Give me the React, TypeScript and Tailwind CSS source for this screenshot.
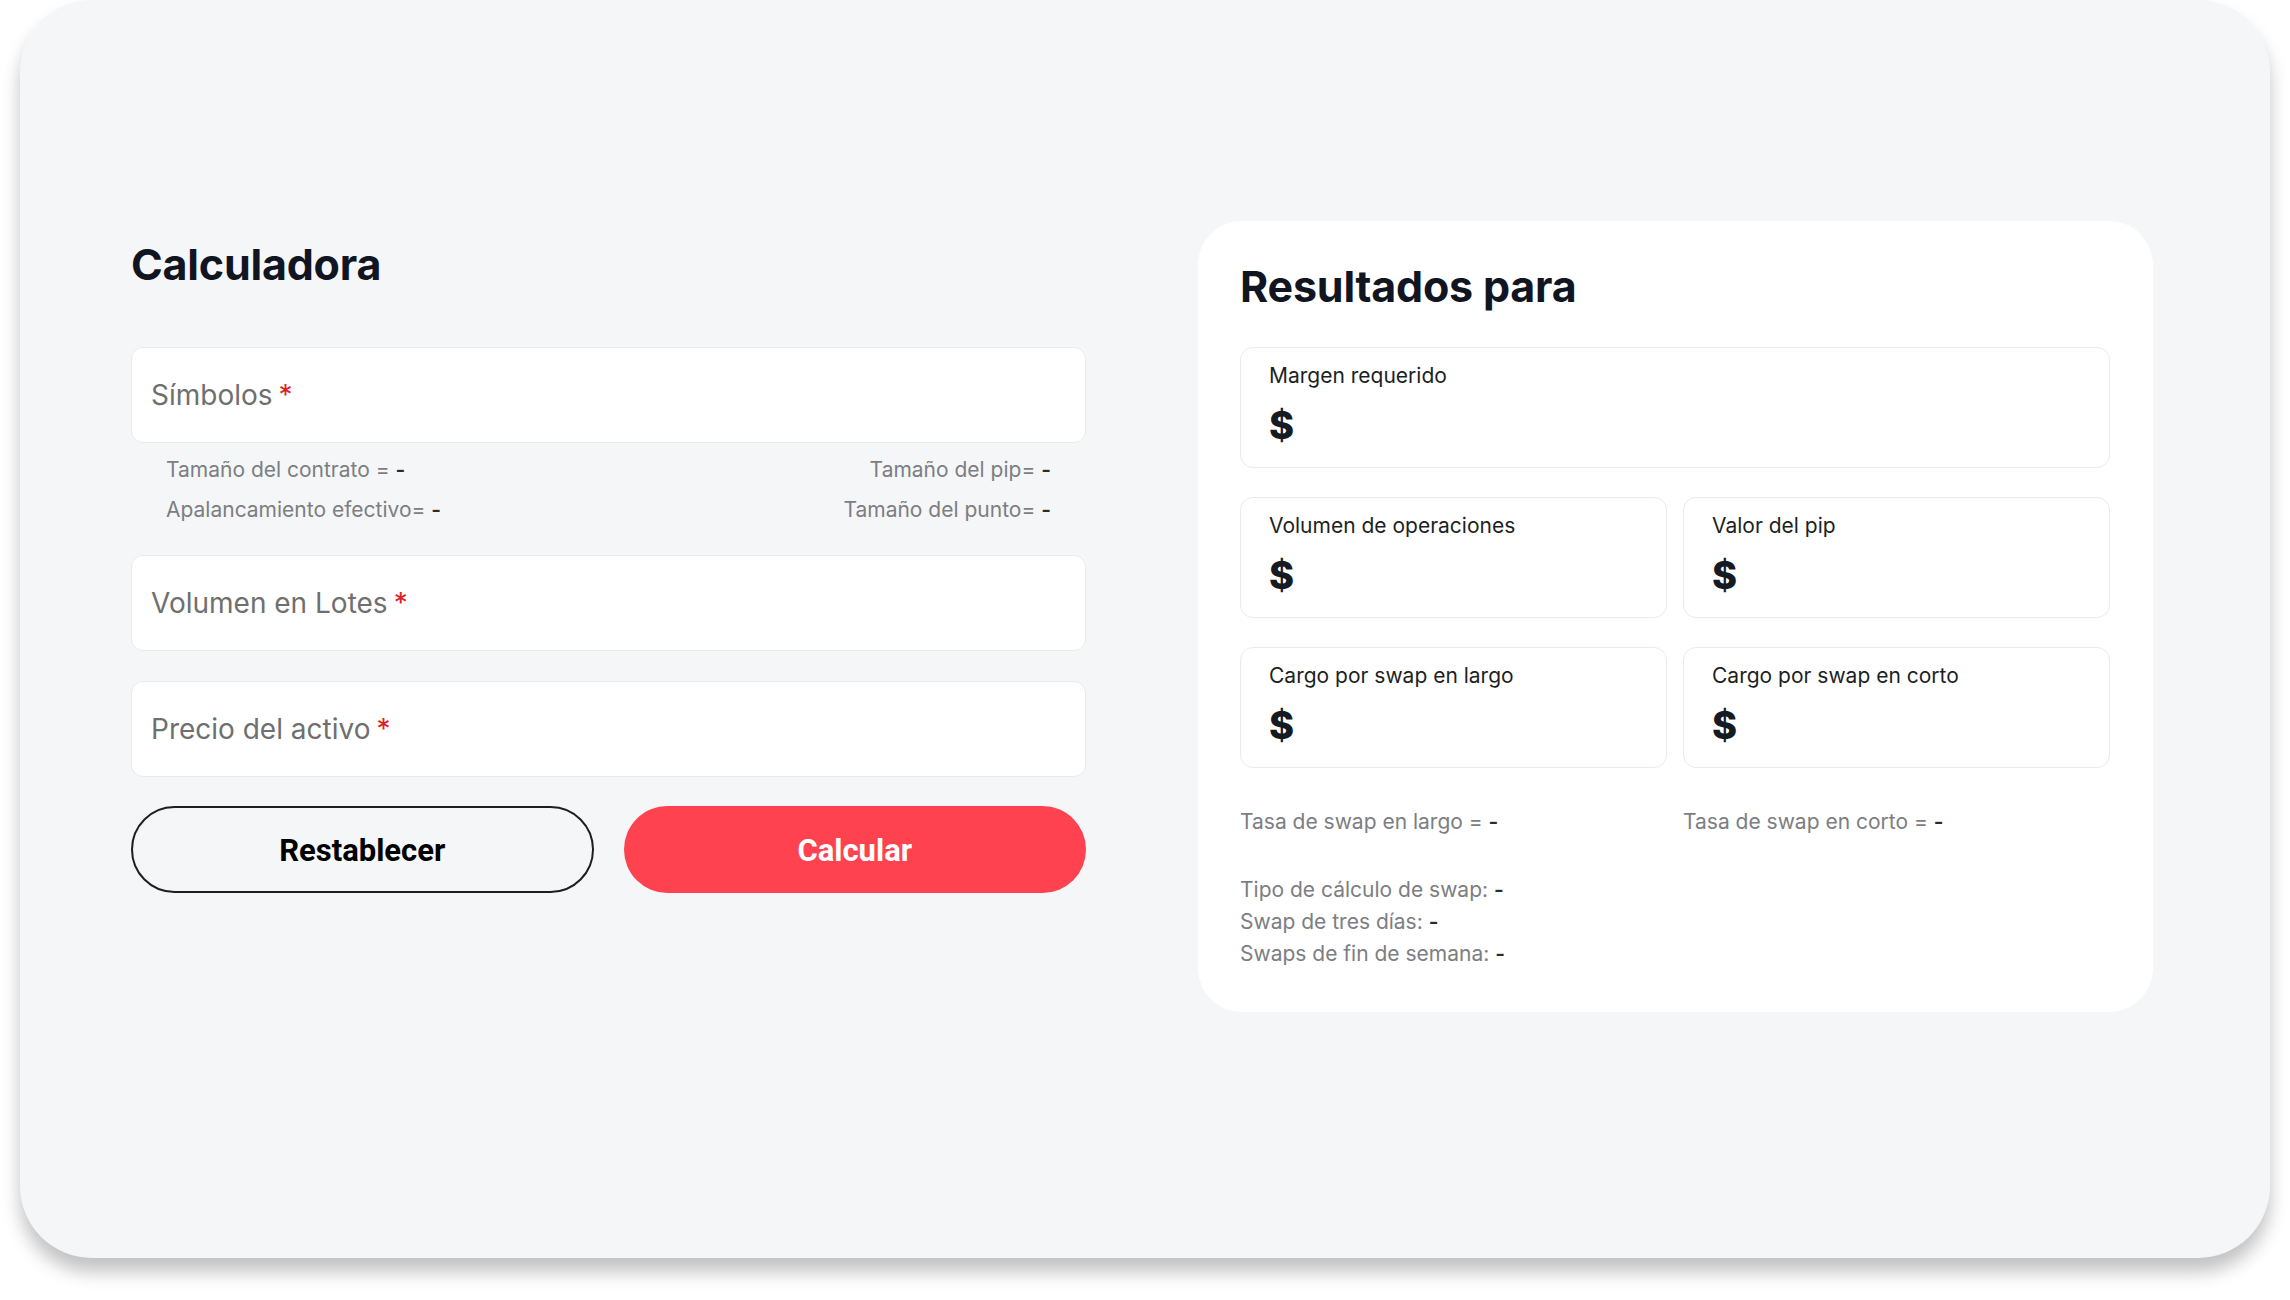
import React from 'react';

const Dash = () => <span className="font-semibold text-[#2b2b2b]">-</span>;

const FieldBox = ({ label }: { label: string }) => (
  <div className="h-[96px] rounded-[12px] border border-[#e9eaec] bg-white flex items-center px-[19px]">
    <span className="text-[28px] leading-[34px] text-[#6f6f6f]">
      {label}
      <span className="ml-[6px] text-[#df1f26]">*</span>
    </span>
  </div>
);

const ResultBox = ({ label }: { label: string }) => (
  <div className="rounded-[13px] border border-[#ebebed] bg-white px-[28px] pt-[14px] pb-[20px]">
    <div className="text-[21px] leading-[28px] text-[#1d1f24]">{label}</div>
    <div className="mt-[13px] text-[38px] leading-[44px] font-extrabold text-[#161a23]">$</div>
  </div>
);

const InfoLine = ({ text }: { text: string }) => (
  <div className="text-[21px] leading-[32px] text-[#7c7e82]">
    {text} <Dash />
  </div>
);

export default function App() {
  return (
    <div className="w-full h-[1300px] bg-white px-[20px] pb-[42px] font-['Inter',sans-serif]">
      <div className="h-full rounded-[72px] bg-[#f5f6f8] shadow-[0_14px_18px_rgba(0,0,0,0.24)] pt-[221px]">
        <div className="ml-[111px] w-[2022px] grid grid-cols-[955px_955px] gap-x-[112px] items-start">
          {/* calculator form */}
          <div className="pt-[19px]">
            <h1 className="text-[43px] leading-[48px] font-bold text-[#111522] tracking-[-0.2px]">Calculadora</h1>

            <div className="mt-[59px]">
              <FieldBox label="Símbolos" />
              <div className="mt-[7px] px-[35px] text-[21px] leading-[40px] text-[#7c7e82]">
                <div className="flex justify-between">
                  <span>Tamaño del contrato = <Dash /></span>
                  <span>Tamaño del pip= <Dash /></span>
                </div>
                <div className="flex justify-between">
                  <span>Apalancamiento efectivo= <Dash /></span>
                  <span>Tamaño del punto= <Dash /></span>
                </div>
              </div>
            </div>

            <div className="mt-[25px] flex flex-col gap-[30px]">
              <FieldBox label="Volumen en Lotes" />
              <FieldBox label="Precio del activo" />
            </div>

            <div className="mt-[29px] grid grid-cols-2 gap-[30px] font-['Roboto',sans-serif]">
              <button className="h-[87px] pt-[3px] rounded-full border-2 border-[#1e1e1e] bg-transparent text-[31px] font-bold text-black">
                Restablecer
              </button>
              <button className="h-[87px] pt-[3px] rounded-full bg-[#ff424f] text-[31px] font-bold text-white">
                Calcular
              </button>
            </div>
          </div>

          {/* results panel */}
          <div className="rounded-[44px] bg-white pl-[42px] pr-[43px] pt-[41px] pb-[42px]">
            <h2 className="text-[43px] leading-[48px] font-bold text-[#111522] tracking-[-0.2px]">Resultados para</h2>

            <div className="mt-[37px] flex flex-col gap-[29px]">
              <ResultBox label="Margen requerido" />
              <div className="grid grid-cols-2 gap-[16px]">
                <ResultBox label="Volumen de operaciones" />
                <ResultBox label="Valor del pip" />
              </div>
              <div className="grid grid-cols-2 gap-[16px]">
                <ResultBox label="Cargo por swap en largo" />
                <ResultBox label="Cargo por swap en corto" />
              </div>
            </div>

            <div className="mt-[38px] grid grid-cols-2 gap-[16px]">
              <InfoLine text="Tasa de swap en largo =" />
              <InfoLine text="Tasa de swap en corto =" />
            </div>

            <div className="mt-[36px]">
              <InfoLine text="Tipo de cálculo de swap:" />
              <InfoLine text="Swap de tres días:" />
              <InfoLine text="Swaps de fin de semana:" />
            </div>
          </div>
        </div>
      </div>
    </div>
  );
}
